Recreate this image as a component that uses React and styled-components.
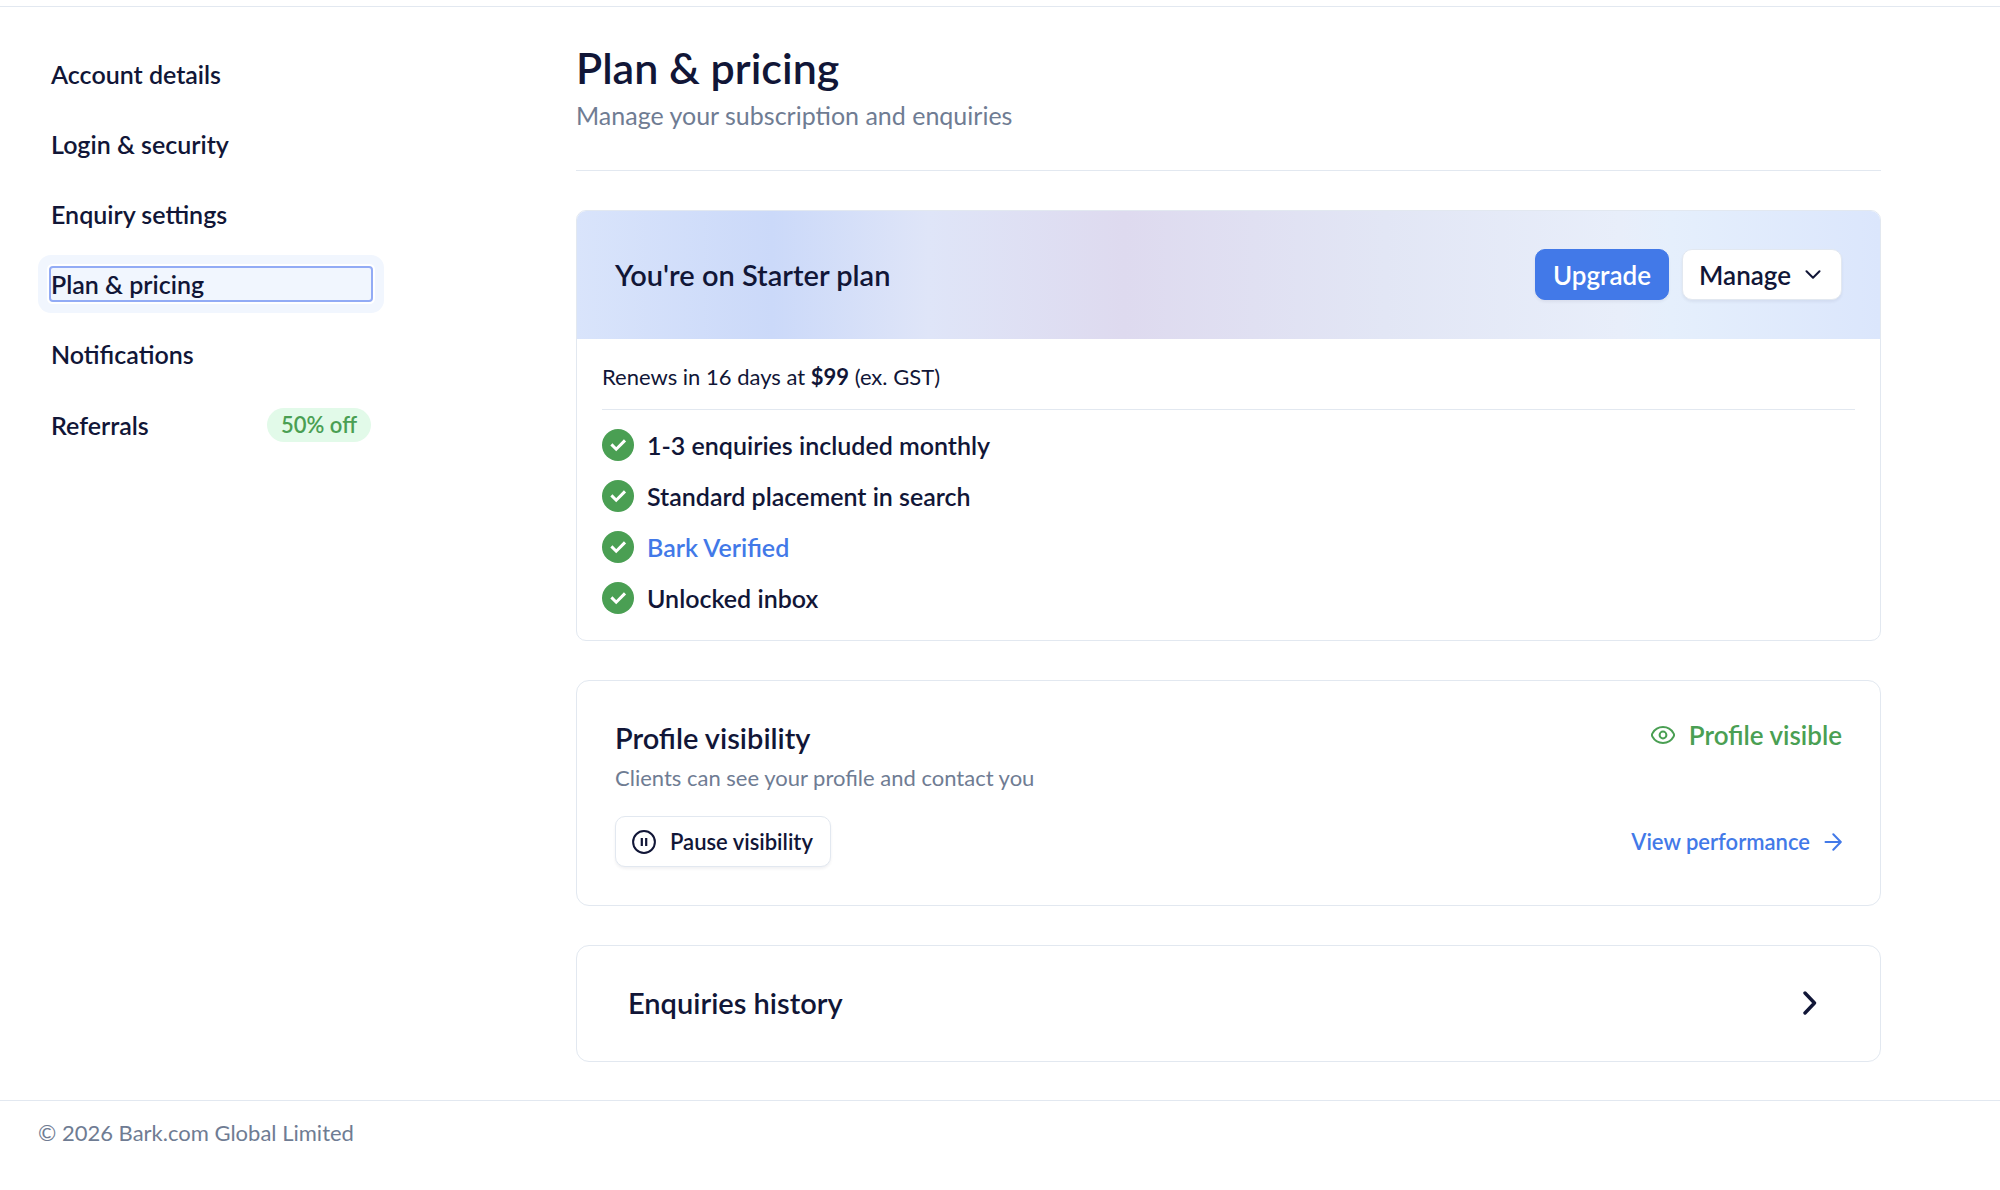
import React, { useState } from "react";
import styled, { createGlobalStyle } from "styled-components";

const navItems = [
  { id: "account", label: "Account details" },
  { id: "login", label: "Login & security" },
  { id: "enquiry", label: "Enquiry settings" },
  { id: "plan", label: "Plan & pricing" },
  { id: "notifications", label: "Notifications" },
  { id: "referrals", label: "Referrals", badge: "50% off" },
];

const features = [
  { text: "1-3 enquiries included monthly" },
  { text: "Standard placement in search" },
  { text: "Bark Verified", href: "#verified" },
  { text: "Unlocked inbox" },
];

const CheckIcon = () => (
  <svg width="32" height="32" viewBox="0 0 32 32" fill="none" aria-hidden="true">
    <circle cx="16" cy="16" r="16" fill="#4a9f53" />
    <path d="M9.4 15.4l4.8 4.8 8.8-8.8" stroke="#fff" strokeWidth="3" />
  </svg>
);

const ChevronDown = () => (
  <svg width="16" height="10" viewBox="0 0 16 10" fill="none" aria-hidden="true">
    <path
      d="M1.5 1.3L8 7.8l6.5-6.5"
      stroke="currentColor"
      strokeWidth="2"
      strokeLinecap="round"
      strokeLinejoin="round"
    />
  </svg>
);

const ChevronRight = () => (
  <svg width="14" height="24" viewBox="0 0 14 24" fill="none" aria-hidden="true">
    <path
      d="M2 2l9.500 10L2 22"
      stroke="currentColor"
      strokeWidth="3.4"
      strokeLinecap="round"
      strokeLinejoin="round"
    />
  </svg>
);

const PauseIcon = () => (
  <svg width="24" height="24" viewBox="0 0 24 24" fill="none" aria-hidden="true">
    <circle cx="12" cy="12" r="10.9" stroke="currentColor" strokeWidth="2" />
    <path d="M9.8 8v8M14.2 8v8" stroke="currentColor" strokeWidth="2.2" />
  </svg>
);

const EyeIcon = () => (
  <svg width="24" height="18" viewBox="0 0 24 18" fill="none" aria-hidden="true">
    <path
      d="M12 1.1c5 0 8.7 3 10.5 6.2a3 3 0 0 1 0 3.4C20.7 13.9 17 16.9 12 16.9S3.3 13.9 1.5 10.7a3 3 0 0 1 0-3.4C3.3 4.1 7 1.1 12 1.1z"
      stroke="currentColor"
      strokeWidth="2"
    />
    <circle cx="12" cy="9" r="3.4" stroke="currentColor" strokeWidth="2" />
  </svg>
);

const ArrowIcon = () => (
  <svg width="18" height="18" viewBox="0 0 18 18" fill="none" aria-hidden="true">
    <path
      d="M1.5 9h15M9.3 1.3L16.8 9l-7.5 7.7"
      stroke="currentColor"
      strokeWidth="2"
      strokeLinecap="round"
      strokeLinejoin="round"
    />
  </svg>
);

const App = () => {
  const [current, setCurrent] = useState("plan");

  return (
    <>
      <GlobalStyle />
      <TopBar />
      <Layout>
        <nav aria-label="Settings">
          <NavList>
            {navItems.map((item) => (
              <NavItem key={item.id} $active={current === item.id}>
                <NavLink
                  href={`#${item.id}`}
                  $active={current === item.id}
                  onClick={() => setCurrent(item.id)}
                >
                  {item.label}
                </NavLink>
                {item.badge && <Badge>{item.badge}</Badge>}
              </NavItem>
            ))}
          </NavList>
        </nav>

        <Main>
          <PageHead>
            <h1>Plan &amp; pricing</h1>
            <p>Manage your subscription and enquiries</p>
          </PageHead>

          <PlanCard>
            <PlanBanner>
              <CardTitle>You're on Starter plan</CardTitle>
              <Actions>
                <Button $primary>Upgrade</Button>
                <Button $menu>
                  Manage
                  <ChevronDown />
                </Button>
              </Actions>
            </PlanBanner>
            <PlanBody>
              <Renewal>
                Renews in 16 days at <strong>$99</strong> (ex. GST)
              </Renewal>
              <FeatureList>
                {features.map((feature) => (
                  <Feature key={feature.text}>
                    <CheckIcon />
                    {feature.href ? (
                      <a href={feature.href}>{feature.text}</a>
                    ) : (
                      <span>{feature.text}</span>
                    )}
                  </Feature>
                ))}
              </FeatureList>
            </PlanBody>
          </PlanCard>

          <VisibilityCard>
            <Row $align="flex-start">
              <div>
                <CardTitle>Profile visibility</CardTitle>
                <CardText>Clients can see your profile and contact you</CardText>
              </div>
              <Status>
                <EyeIcon />
                Profile visible
              </Status>
            </Row>
            <Row $align="center">
              <Button $small>
                <PauseIcon />
                Pause visibility
              </Button>
              <TextLink href="#performance">
                View performance
                <ArrowIcon />
              </TextLink>
            </Row>
          </VisibilityCard>

          <HistoryCard href="#history">
            <CardTitle>Enquiries history</CardTitle>
            <ChevronRight />
          </HistoryCard>
        </Main>
      </Layout>
      <Footer>© 2026 Bark.com Global Limited</Footer>
    </>
  );
};

export default App;

const GlobalStyle = createGlobalStyle`
  * {
    box-sizing: border-box;
  }

  body {
    margin: 0;
    background: #ffffff;
    color: #111637;
    font-family: Lato, "Liberation Sans", sans-serif;
    font-size: 25px;
    line-height: 32px;
  }

  h1, h2, p, ul {
    margin: 0;
    padding: 0;
  }

  a {
    text-decoration: none;
  }

  svg {
    display: block;
    flex-shrink: 0;
  }
`;

const TopBar = styled.header`
  height: 7px;
  border-bottom: 1px solid #e2e8f0;
`;

const Layout = styled.div`
  display: grid;
  grid-template-columns: 346px minmax(0, 1fr);
  column-gap: 192px;
  padding: 38px 119px 38px 38px;
`;

const NavList = styled.ul`
  display: flex;
  flex-direction: column;
  gap: 12px;
  list-style: none;
`;

const NavItem = styled.li`
  display: flex;
  align-items: center;
  padding: 13px;
  border-radius: 13px;
  background: ${({ $active }) => ($active ? "#f1f6fe" : "transparent")};
`;

const NavLink = styled.a`
  flex: 1;
  border-radius: 2px;
  color: #111637;
  font-weight: 600;
  outline: ${({ $active }) => ($active ? "2px solid #92abf5" : "none")};
  box-shadow: ${({ $active }) => ($active ? "0 0 0 4px #ffffff" : "none")};
`;

const Badge = styled.span`
  padding: 0 14px;
  border-radius: 17px;
  background: #e2fae9;
  color: #4a9f53;
  font-size: 22px;
  font-weight: 600;
  line-height: 34px;
`;

const Main = styled.main`
  display: flex;
  flex-direction: column;
  gap: 39px;
`;

const PageHead = styled.div`
  padding-bottom: 39px;
  border-bottom: 1px solid #e2e8f0;

  h1 {
    font-size: 43px;
    font-weight: 600;
    line-height: 46px;
  }

  p {
    margin-top: 8px;
    color: #6f7c93;
    font-weight: 400;
  }
`;

const Card = styled.section`
  border: 1px solid #e2e8f0;
  border-radius: 13px;
  background: #ffffff;
`;

const PlanCard = styled(Card)`
  overflow: hidden;
  border-radius: 10px;
`;

const PlanBanner = styled.div`
  display: flex;
  align-items: center;
  justify-content: space-between;
  padding: 38px 38px 39px;
  background: linear-gradient(
    90deg,
    #d9e4fb 0%,
    #cbd9f9 15%,
    #dfe5f8 27%,
    #dedaef 42%,
    #e2e6f5 62%,
    #e8eefa 80%,
    #e5effc 84%,
    #dbe6fc 100%
  );
`;

const CardTitle = styled.h2`
  font-size: 29px;
  font-weight: 600;
  line-height: 38px;
`;

const Actions = styled.div`
  display: flex;
  gap: 13px;
`;

const Button = styled.button`
  display: flex;
  align-items: center;
  gap: 14px;
  height: 51px;
  padding: 0 ${({ $menu }) => ($menu ? "20px" : "17px")} 0
    ${({ $primary }) => ($primary ? "17px" : "16px")};
  border: 1px solid ${({ $primary }) => ($primary ? "#4279e8" : "#e2e8f0")};
  border-radius: 10px;
  background: ${({ $primary }) => ($primary ? "#4279e8" : "#ffffff")};
  color: ${({ $primary }) => ($primary ? "#ffffff" : "#111637")};
  box-shadow: 0 2px 3px rgba(17, 22, 55, 0.06);
  font-family: inherit;
  font-size: ${({ $small }) => ($small ? "22px" : "26px")};
  font-weight: 600;
  cursor: pointer;
`;

const PlanBody = styled.div`
  padding: 0 25px;
`;

const Renewal = styled.p`
  padding: 22px 0 16px;
  border-bottom: 1px solid #e2e8f0;
  font-size: 22px;
`;

const FeatureList = styled.ul`
  display: flex;
  flex-direction: column;
  gap: 19px;
  padding: 19px 0 26px;
  list-style: none;
`;

const Feature = styled.li`
  display: flex;
  align-items: center;
  gap: 13px;
  font-weight: 600;

  a {
    color: #4279e8;
  }
`;

const VisibilityCard = styled(Card)`
  display: flex;
  flex-direction: column;
  gap: 22px;
  padding: 38px;
`;

const Row = styled.div`
  display: flex;
  align-items: ${({ $align }) => $align};
  justify-content: space-between;
`;

const CardText = styled.p`
  margin-top: 5px;
  color: #6f7c93;
  font-size: 22px;
`;

const Status = styled.div`
  display: flex;
  align-items: center;
  gap: 14px;
  color: #4a9f53;
  font-size: 26px;
  font-weight: 600;
`;

const TextLink = styled.a`
  display: flex;
  align-items: center;
  gap: 14px;
  color: #4279e8;
  font-size: 22px;
  font-weight: 600;
`;

const HistoryCard = styled.a`
  display: flex;
  align-items: center;
  justify-content: space-between;
  padding: 38px 63px 39px 51px;
  border: 1px solid #e2e8f0;
  border-radius: 13px;
  color: inherit;
`;

const Footer = styled.footer`
  padding: 16px 38px 38px;
  border-top: 1px solid #e2e8f0;
  color: #6f7c93;
  font-size: 22px;
`;
